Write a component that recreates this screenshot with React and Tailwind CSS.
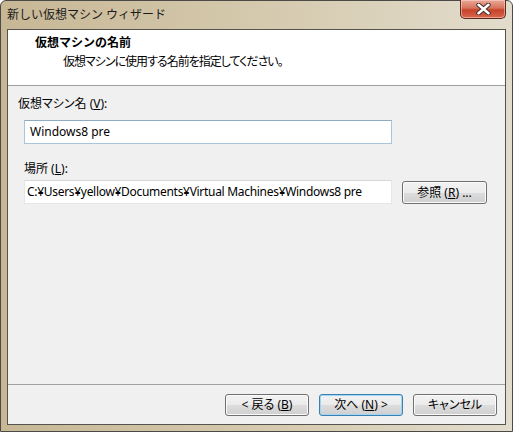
import React from "react";

const btn =
    "h-[22px] rounded-[3px] border text-[12px] text-black flex items-center justify-center bg-[linear-gradient(#f2f2f2,#ebebeb_50%,#dddddd_50%,#cfcfcf)]";

const Key = ({ children }) => (
    <span className="underline underline-offset-1">{children}</span>
);

const CloseButton = () => (
    <div className="w-[46px] h-[19px] -mt-px rounded-b-[5px] border border-t-0 border-[#5a2a1e] bg-[linear-gradient(#eaa898,#d6735c_45%,#c5432a_55%,#d9664c)] shadow-[inset_0_0_0_1px_rgba(255,220,210,0.5)] flex items-center justify-center">
        <svg width="17" height="12" viewBox="0 0 17 12">
            <path
                d="M3.5 1.8 L13.5 10.2 M13.5 1.8 L3.5 10.2"
                stroke="#3b2a26"
                strokeWidth="4.4"
                strokeLinecap="round"
            />
            <path
                d="M3.5 1.8 L13.5 10.2 M13.5 1.8 L3.5 10.2"
                stroke="#ffffff"
                strokeWidth="2.6"
                strokeLinecap="round"
            />
        </svg>
    </div>
);

export default function App() {
    return (
        <div className="w-[513px] h-[432px] flex flex-col rounded-t-[6px] border border-[#4b4a47] bg-[linear-gradient(90deg,#c7b795,#d6cbb0_55%,#e2dccc)] font-['Noto_Sans','Noto_Sans_CJK_JP',sans-serif] text-black">
            {/* title bar */}
            <div className="h-[28px] flex items-start justify-between pl-[6px] pr-[6px]">
                <div className="pt-[6px] text-[12px] leading-[16px] text-[#1a1a1a]">
                    新しい仮想マシン ウィザード
                </div>
                <CloseButton />
            </div>

            {/* client area */}
            <div className="mx-[6px] h-[396px] border border-[#55534e] bg-[#f0f0f0] flex flex-col">
                <div className="h-[56px] bg-white border-b border-[#a0a0a0] pl-[27px] pt-[5px] text-[12px] leading-[16px]">
                    <div className="font-bold">仮想マシンの名前</div>
                    <div className="mt-[3px] pl-[28px] tracking-[-1px] [font-feature-settings:'palt']">
                        仮想マシンに使用する名前を指定してください。
                    </div>
                </div>

                <div className="flex-1 flex flex-col text-[12px] leading-[16px] [font-feature-settings:'palt']">
                    <div className="pl-[10px] pt-[10px]">
                        仮想マシン名 (<Key>V</Key>):
                    </div>
                    <div className="mt-[8px] ml-[16px] w-[368px] h-[24px] bg-white border border-[#aac4dc] border-t-[#8eaac6] pl-[5px] flex items-center">
                        Windows8 pre
                    </div>

                    <div className="pl-[16px] pt-[17px]">
                        場所 (<Key>L</Key>):
                    </div>
                    <div className="mt-[3px] ml-[16px] flex items-start gap-[10px]">
                        <div className="w-[368px] h-[24px] bg-white border border-[#e3e6ea] border-t-[#d5d8dc] pl-[2px] flex items-center whitespace-nowrap overflow-hidden tracking-[-0.3px]">
                            C:¥Users¥yellow¥Documents¥Virtual Machines¥Windows8 pre
                        </div>
                        <button
                            className={`${btn} mt-px w-[85px] h-[23px] border-[#707070] shadow-[inset_0_0_0_1px_#fbfbfb]`}
                        >
                            参照 (<Key>R</Key>) ...
                        </button>
                    </div>

                    <div className="flex-1" />

                    {/* footer */}
                    <div className="h-[40px] border-t border-[#a0a0a0] flex items-start justify-end gap-[10px] pr-[8px] pt-[9px]">
                        <button
                            className={`${btn} w-[84px] border-[#707070] shadow-[inset_0_0_0_1px_#fbfbfb]`}
                        >
                            &lt; 戻る (<Key>B</Key>)
                        </button>
                        <button
                            className={`${btn} w-[84px] border-[#3c7fb1] shadow-[inset_0_0_0_1px_#9fd6f4]`}
                        >
                            次へ (<Key>N</Key>) &gt;
                        </button>
                        <button
                            className={`${btn} w-[84px] border-[#707070] shadow-[inset_0_0_0_1px_#fbfbfb]`}
                        >
                            キャンセル
                        </button>
                    </div>
                </div>
            </div>
        </div>
    );
}
